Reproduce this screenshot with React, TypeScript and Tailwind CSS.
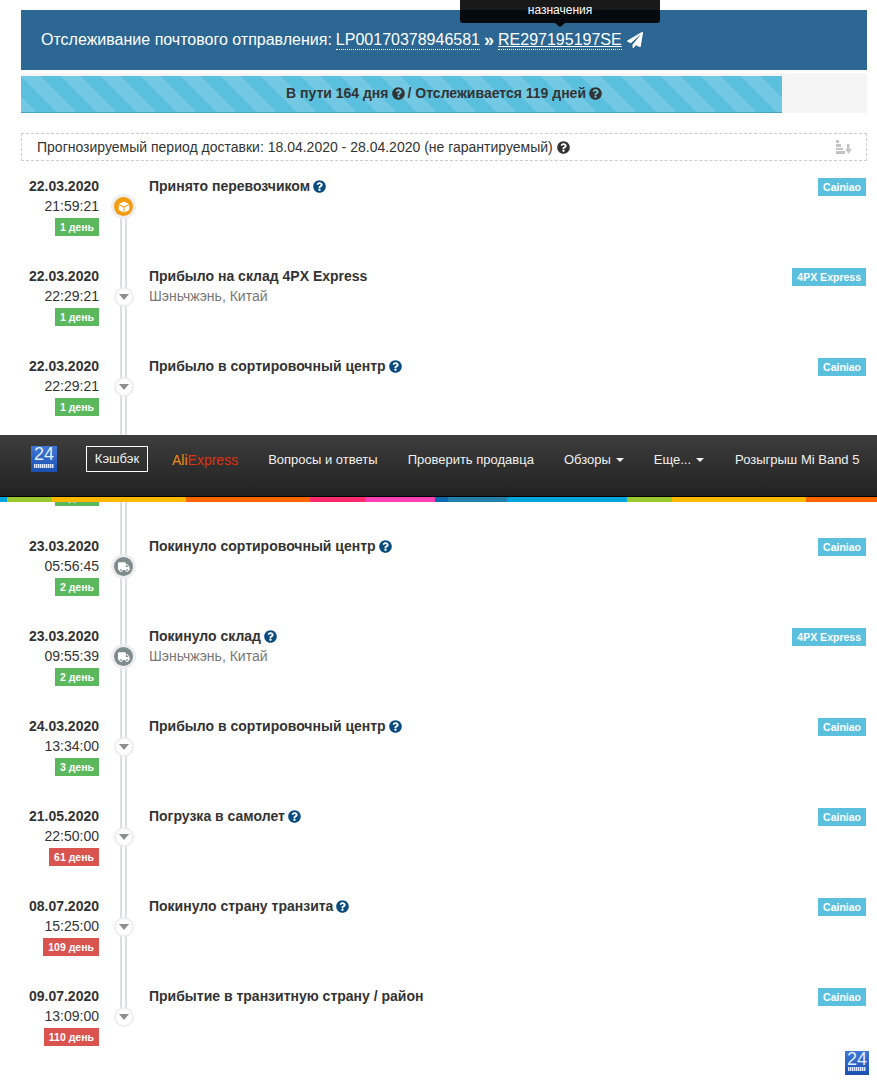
import { FaQuestionCircle, FaPaperPlane, FaTruck } from "react-icons/fa";

type Ev = {
  date?: string;
  time?: string;
  days: string;
  late?: boolean;
  title?: string;
  help?: boolean;
  place?: string;
  carrier?: string;
  icon: "cube" | "down" | "truck";
};

// четвертая строка почти целиком закрыта меню, видно только низ плашки
const events: Ev[] = [
  { date: "22.03.2020", time: "21:59:21", days: "1 день", title: "Принято перевозчиком", help: true, carrier: "Cainiao", icon: "cube" },
  { date: "22.03.2020", time: "22:29:21", days: "1 день", title: "Прибыло на склад 4PX Express", place: "Шэньчжэнь, Китай", carrier: "4PX Express", icon: "down" },
  { date: "22.03.2020", time: "22:29:21", days: "1 день", title: "Прибыло в сортировочный центр", help: true, carrier: "Cainiao", icon: "down" },
  { days: "2 день", icon: "down" },
  { date: "23.03.2020", time: "05:56:45", days: "2 день", title: "Покинуло сортировочный центр", help: true, carrier: "Cainiao", icon: "truck" },
  { date: "23.03.2020", time: "09:55:39", days: "2 день", title: "Покинуло склад", help: true, place: "Шэньчжэнь, Китай", carrier: "4PX Express", icon: "truck" },
  { date: "24.03.2020", time: "13:34:00", days: "3 день", title: "Прибыло в сортировочный центр", help: true, carrier: "Cainiao", icon: "down" },
  { date: "21.05.2020", time: "22:50:00", days: "61 день", late: true, title: "Погрузка в самолет", help: true, carrier: "Cainiao", icon: "down" },
  { date: "08.07.2020", time: "15:25:00", days: "109 день", late: true, title: "Покинуло страну транзита", help: true, carrier: "Cainiao", icon: "down" },
  { date: "09.07.2020", time: "13:09:00", days: "110 день", late: true, title: "Прибытие в транзитную страну / район", carrier: "Cainiao", icon: "down" },
];

const stripes = {
  backgroundImage:
    "linear-gradient(45deg, rgba(255,255,255,.15) 25%, transparent 25%, transparent 50%, rgba(255,255,255,.15) 50%, rgba(255,255,255,.15) 75%, transparent 75%, transparent)",
};

const stripeBand = ["#00a6dd", "#9ac82f", "#ffb900", "#ff6600", "#ff2a6d", "#ff3fb4", "#0a6ab0", "#2281aa", "#00a6dd", "#9ac82f", "#ffb900", "#ff6600"];
const stripeWidths = [7, 45, 134, 124, 55, 70, 13, 59, 120, 45, 134, 71];

function Logo24({ size }: { size: "lg" | "sm" }) {
  const box = size === "lg" ? "h-[26px] w-[26px]" : "h-6 w-6";
  return (
    <div className={`${box} relative flex flex-col items-center bg-gradient-to-b from-[#3f78d8] to-[#1b4fb0] text-[18px] leading-[17px] text-[#e4eeff]`}>
      <span className="font-light">24</span>
      <span className="absolute bottom-[4px] left-[3px] right-[3px] h-[4px] bg-[repeating-linear-gradient(90deg,#dbe6ff_0,#dbe6ff_1px,#7f9fe0_1px,#7f9fe0_2px)]" />
    </div>
  );
}

function Node({ icon }: { icon: Ev["icon"] }) {
  if (icon === "cube")
    return (
      <div className="flex h-[19px] w-[19px] items-center justify-center rounded-full bg-[#f39c12] ring-[3px] ring-[#eeeeee]">
        <svg width="12" height="12" viewBox="0 0 12 12" className="fill-white">
          <path d="M6 0.500 11 3 6 5.500 1 3z" />
          <path d="M0.800 4 5.500 6.400V11.500L0.800 9z" />
          <path d="M11.200 4 6.500 6.400V11.500L11.200 9z" />
        </svg>
      </div>
    );
  if (icon === "truck")
    return (
      <div className="flex h-[19px] w-[19px] items-center justify-center rounded-full bg-[#7f8c8d] ring-[3px] ring-[#eeeeee]">
        <FaTruck className="text-[12px] text-white" />
      </div>
    );
  return (
    <div className="flex h-[16px] w-[16px] items-center justify-center rounded-full bg-white ring-[2px] ring-[#eeeeee]">
      <svg width="10" height="6" viewBox="0 0 10 6" className="fill-[#8c8f92]">
        <path d="M0 0h10L5 6z" />
      </svg>
    </div>
  );
}

function Row({ e, first, last }: { e: Ev; first: boolean; last: boolean }) {
  return (
    <div className="flex h-[90px]">
      <div className="flex w-[78px] shrink-0 flex-col items-end">
        <div className="h-[20px] text-[14px] font-bold leading-[20px] text-[#333333]">{e.date}</div>
        <div className="h-[20px] text-[14px] leading-[20px] text-[#333333]">{e.time}</div>
        <div className={`mt-[2px] flex h-[18px] items-center px-[5px] pt-[1px] text-[10.5px] font-bold text-white ${e.late ? "bg-[#d9534f]" : "bg-[#5cb85c]"}`}>
          {e.days}
        </div>
      </div>
      <div className="relative w-[50px] shrink-0">
        <div className={`absolute left-[21px] w-[7px] border-x-[2px] border-[#dbdfe3] ${first ? "top-[30px]" : "top-0"} ${last ? "h-[30px]" : "bottom-0"}`} />
        <div className="absolute left-[15px] top-[21px] flex h-[19px] w-[19px] items-center justify-center">
          <Node icon={e.icon} />
        </div>
      </div>
      <div className="min-w-0 flex-1">
        <div className="flex items-center gap-[3px] text-[14px] font-bold leading-[20px] text-[#333333]">
          {e.title}
          {e.help && <FaQuestionCircle className="text-[13px] text-[#0b4c7e]" />}
        </div>
        {e.place && <div className="text-[14px] leading-[20px] text-[#777777]">{e.place}</div>}
      </div>
      {e.carrier && (
        <div className="mr-[1px] mt-[2px] shrink-0">
          <span className="flex h-[18px] items-center bg-[#5bc0de] px-[5px] pt-[1px] text-[10.5px] font-bold text-white">{e.carrier}</span>
        </div>
      )}
    </div>
  );
}

export default function App() {
  return (
    <div className="relative h-[1083px] w-[877px] overflow-hidden bg-white font-['Liberation_Sans',Arial,sans-serif] text-[#333333]">
      <div className="ml-[21px] w-[846px] pt-[10px]">
        {/* шапка */}
        <div className="flex h-[60px] items-center bg-[#2c6692] pl-[20px] text-[16px] text-white">
          <span>Отслеживание почтового отправления:</span>
          <span className="ml-[4px] border-b border-dotted border-white leading-[19px]">LP00170378946581</span>
          <span className="ml-[4px] mr-[4px] text-[18px] font-bold leading-none">»</span>
          <span className="border-b border-dotted border-white leading-[19px] underline">RE297195197SE</span>
          <FaPaperPlane className="ml-[5px] text-[16px]" />
        </div>

        {/* прогресс */}
        <div className="mt-[3px] grid h-[40px] bg-[#f5f5f5] pt-[3px]">
          <div className="h-[37px] w-[761px] border-b border-[#46a4c2] bg-[#5bc0de] bg-[length:40px_40px] [grid-area:1/1]" style={stripes} />
          <div className="flex h-[37px] items-center justify-center gap-[3px] pb-[2px] text-[14px] font-bold [grid-area:1/1]">
            В пути 164 дня <FaQuestionCircle className="text-[13px]" /> / Отслеживается 119 дней <FaQuestionCircle className="text-[13px]" />
          </div>
        </div>

        {/* прогноз */}
        <div className="mt-[20px] flex h-[28px] items-center justify-between border border-dashed border-[#cccccc] pl-[15px] pr-[14px] text-[14px]">
          <span className="flex items-center gap-[4px]">
            Прогнозируемый период доставки: 18.04.2020 - 28.04.2020 (не гарантируемый)
            <FaQuestionCircle className="text-[13px]" />
          </span>
          <svg width="16" height="14" viewBox="0 0 16 14" className="fill-[#c4c4c4]">
            <path d="M0 0h3v3H0zM0 4h5v3H0zM0 8h7v2H0zM0 11h9v3H0z" />
            <path d="M11 4h2.500v5H16l-3.700 5L9.500 9H11z" />
          </svg>
        </div>

        {/* события */}
        <div className="mt-[15px]">
          {events.map((e, i) => (
            <Row key={i} e={e} first={i === 0} last={i === events.length - 1} />
          ))}
        </div>
      </div>

      {/* подсказка */}
      <div className="absolute left-[460px] top-0 flex h-[23px] w-[200px] items-end justify-center rounded-b-[3px] bg-[rgba(0,0,0,0.9)] pb-[7px] text-[12px] leading-none text-white">
        назначения
        <div className="absolute -bottom-[4px] left-1/2 -ml-[5px] border-x-[5px] border-t-[4px] border-x-transparent border-t-black" />
      </div>

      {/* меню */}
      <div className="absolute inset-x-0 top-[435px]">
        <div className="flex h-[62px] items-center border-b border-black bg-gradient-to-b from-[#3d3d3d] to-[#222222] pb-[13px] text-[13px] text-[#f0f0f0]">
          <div className="ml-[31px]">
            <Logo24 size="lg" />
          </div>
          <div className="ml-[29px] flex h-[26px] w-[62px] items-center justify-center border border-white">Кэшбэк</div>
          <div className="ml-[24px] pt-[2px] text-[14px]">
            <span className="text-[#f08a12]">Ali</span>
            <span className="text-[#e03010]">Express</span>
          </div>
          <div className="ml-[30px] pt-[2px]">Вопросы и ответы</div>
          <div className="ml-[30px] pt-[2px]">Проверить продавца</div>
          <div className="ml-[30px] flex items-center gap-[5px] pt-[2px]">
            Обзоры <span className="border-x-[4px] border-t-[4px] border-x-transparent border-t-[#f0f0f0]" />
          </div>
          <div className="ml-[30px] flex items-center gap-[5px] pt-[2px]">
            Еще... <span className="border-x-[4px] border-t-[4px] border-x-transparent border-t-[#f0f0f0]" />
          </div>
          <div className="ml-[31px] pt-[2px]">Розыгрыш Mi Band 5</div>
        </div>
        <div className="flex h-[5px]">
          {stripeBand.map((c, i) => (
            <div key={i} className="h-full" style={{ background: c, width: stripeWidths[i] }} />
          ))}
        </div>
      </div>

      {/* логотип внизу */}
      <div className="absolute left-[845px] top-[1051px]">
        <Logo24 size="sm" />
      </div>
    </div>
  );
}
